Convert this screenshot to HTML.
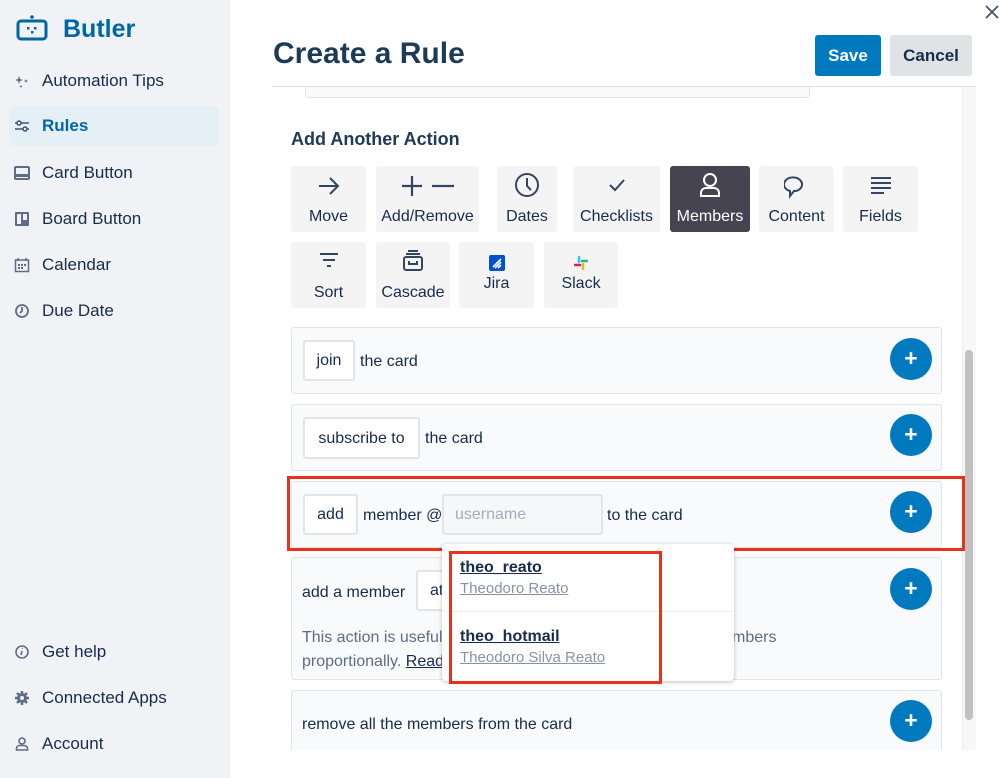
<!DOCTYPE html>
<html><head><meta charset="utf-8"><style>
*{box-sizing:border-box;margin:0;padding:0}
body{width:999px;height:778px;overflow:hidden;background:#fff;font-family:"Liberation Sans",sans-serif;color:#172b4d;position:relative}
.side{position:absolute;left:0;top:0;width:230px;height:778px;background:#f1f2f6}
.nav{position:absolute;left:14px;font-size:17px;color:#172b4d;display:flex;align-items:center}
.nav .ic{width:16px;height:16px;margin-right:12px;display:inline-block}
.sel{position:absolute;left:9px;top:106px;width:210px;height:40px;background:#e4f0f6;border-radius:6px}
.abs{position:absolute}
.btn{position:absolute;background:#f4f4f4;border-radius:3px;text-align:center;font-size:16px;color:#172b4d}
.btn svg{position:absolute;left:50%;transform:translateX(-50%)}
.btn .l{position:absolute;left:0;right:0;top:42px}
.card{position:absolute;left:291px;width:651px;background:#f9fafc;border:1px solid #e2e4e9;border-radius:3px;font-size:16px}
.plus{position:absolute;right:9px;width:42px;height:42px;border-radius:50%;background:#0079bf;color:#fff;text-align:center;line-height:41px;font-size:23px;font-weight:bold}
.box{position:absolute;background:#fff;border:2px solid #e2e4e9;border-radius:3px;text-align:center;font-size:16px}
</style></head><body>
<div class="side">
 <svg class="abs" style="left:16px;top:14px" width="32" height="28" viewBox="0 0 32 28"><circle cx="16" cy="3" r="1.8" fill="#0067a3"/><rect x="2" y="7" width="28" height="18" rx="3" fill="none" stroke="#0067a3" stroke-width="3"/><rect x="11" y="13" width="2.5" height="2.5" fill="#0067a3"/><rect x="18" y="13" width="2.5" height="2.5" fill="#0067a3"/><rect x="15" y="17" width="2.5" height="2.5" fill="#0067a3"/></svg>
 <div class="abs" style="left:63px;top:15px;font-size:25px;font-weight:bold;color:#0067a3">Butler</div>
 <div class="nav" style="top:71px"><svg class="ic" viewBox="0 0 16 16" fill="#5e6c84"><path d="M5 3l1 3 3 1-3 1-1 3-1-3-3-1 3-1z"/><path d="M12 6l.6 1.4L14 8l-1.4.6L12 10l-.6-1.4L10 8l1.4-.6z"/><path d="M7 12l.5 1 1 .5-1 .5-.5 1-.5-1-1-.5 1-.5z"/></svg>Automation Tips</div>
 <div class="sel"></div>
 <div class="nav" style="top:116px;color:#0067a3;font-weight:bold"><svg class="ic" viewBox="0 0 16 16" fill="none" stroke="#44546f" stroke-width="1.5"><path d="M1 5h14M1 11h14"/><circle cx="5" cy="5" r="2" fill="#f1f2f6"/><circle cx="11" cy="11" r="2" fill="#e4f0f6"/></svg>Rules</div>
 <div class="nav" style="top:163px"><svg class="ic" viewBox="0 0 16 16"><rect x="1" y="2" width="14" height="12" rx="1" fill="none" stroke="#5e6c84" stroke-width="2"/><rect x="2" y="9" width="12" height="3" fill="#5e6c84"/></svg>Card Button</div>
 <div class="nav" style="top:209px"><svg class="ic" viewBox="0 0 16 16"><rect x="1" y="1" width="14" height="14" rx="1" fill="#5e6c84"/><rect x="3" y="3" width="4" height="10" fill="#f1f2f6"/><rect x="9" y="3" width="4" height="6" fill="#f1f2f6"/></svg>Board Button</div>
 <div class="nav" style="top:255px"><svg class="ic" viewBox="0 0 16 16"><rect x="1.5" y="3" width="13" height="11.5" fill="none" stroke="#5e6c84" stroke-width="1.5"/><path d="M4 1v3M12 1v3" stroke="#5e6c84" stroke-width="1.5"/><path d="M4 7h2v2H4zM7 7h2v2H7zM10 7h2v2h-2zM4 10h2v2H4zM7 10h2v2H7z" fill="#5e6c84"/></svg>Calendar</div>
 <div class="nav" style="top:301px"><svg class="ic" viewBox="0 0 16 16" fill="none" stroke="#5e6c84" stroke-width="1.8"><circle cx="8" cy="8" r="6"/><path d="M8 4v4l-2 2"/></svg>Due Date</div>
 <div class="nav" style="top:642px"><svg class="ic" viewBox="0 0 16 16" fill="none" stroke="#5e6c84" stroke-width="1.6"><circle cx="8" cy="8" r="6"/><path d="M8 7l-1 4M8.3 4.5v.5"/></svg>Get help</div>
 <div class="nav" style="top:688px"><svg class="ic" viewBox="0 0 16 16"><circle cx="8" cy="8" r="5" fill="#5e6c84"/><path d="M8 1v14M1 8h14M3 3l10 10M13 3L3 13" stroke="#5e6c84" stroke-width="2.5"/><circle cx="8" cy="8" r="2" fill="#f1f2f6"/></svg>Connected Apps</div>
 <div class="nav" style="top:734px"><svg class="ic" viewBox="0 0 16 16" fill="none" stroke="#5e6c84" stroke-width="1.6"><circle cx="8" cy="5" r="3"/><path d="M2.5 14v-1.5a3 3 0 013-3h5a3 3 0 013 3V14z"/></svg>Account</div>
</div>

<svg class="abs" style="left:984px;top:4px" width="15" height="16" viewBox="0 0 15 16"><path d="M2 2l12 12M14 2L2 14" stroke="#44546f" stroke-width="1.8"/></svg>
<div class="abs" style="left:273px;top:37px;font-size:30px;font-weight:bold;color:#1d3a57">Create a Rule</div>
<div class="abs" style="left:815px;top:35px;width:66px;height:41px;background:#0079bf;border-radius:3px;color:#fff;font-weight:bold;font-size:17px;text-align:center;line-height:42px">Save</div>
<div class="abs" style="left:890px;top:35px;width:82px;height:41px;background:#e0e3e6;border-radius:3px;color:#172b4d;font-weight:bold;font-size:17px;text-align:center;line-height:42px">Cancel</div>
<div class="abs" style="left:273px;top:86px;width:703px;height:1px;background:#dcdfe4"></div>
<div class="abs" style="left:305px;top:87px;width:505px;height:11px;border:1px solid #e2e4e9;border-top:none;border-radius:0 0 4px 4px;background:#f9fafc"></div>
<div class="abs" style="left:962px;top:87px;width:14px;height:663px;background:#f7f7f7;border-left:1px solid #eee"></div>
<div class="abs" style="left:965px;top:350px;width:8px;height:370px;background:#c1c1c1;border-radius:4px"></div>
<div class="abs" style="left:291px;top:129px;font-size:18px;font-weight:bold;color:#1d3a57">Add Another Action</div>

<div class="btn" style="left:291px;top:166px;width:75px;height:66px"><svg style="top:9px" width="24" height="22" viewBox="0 0 24 22" fill="none" stroke="#344563" stroke-width="2"><path d="M2 11h19M13 3l8 8-8 8"/></svg><div class="l">Move</div></div>
<div class="btn" style="left:376px;top:166px;width:103px;height:66px"><svg style="top:9px" width="54" height="22" viewBox="0 0 54 22" fill="none" stroke="#344563" stroke-width="2.2"><path d="M1 11h20M11 1v20M31 11h22"/></svg><div class="l">Add/Remove</div></div>
<div class="btn" style="left:497px;top:166px;width:60px;height:66px"><svg style="top:6px" width="26" height="26" viewBox="0 0 26 26" fill="none" stroke="#344563" stroke-width="2"><circle cx="13" cy="13" r="11"/><path d="M13 6v8l4 4"/></svg><div class="l">Dates</div></div>
<div class="btn" style="left:573px;top:166px;width:87px;height:66px"><svg style="top:12px" width="18" height="14" viewBox="0 0 18 14" fill="none" stroke="#344563" stroke-width="2"><path d="M2 7l5 5L16 2"/></svg><div class="l">Checklists</div></div>
<div class="btn" style="left:670px;top:166px;width:80px;height:66px;background:#474452;color:#fff"><svg style="top:6px" width="22" height="26" viewBox="0 0 22 26" fill="none" stroke="#fff" stroke-width="2"><circle cx="11" cy="8" r="6"/><path d="M2 24v-3a5 5 0 015-5h8a5 5 0 015 5v3z"/></svg><div class="l">Members</div></div>
<div class="btn" style="left:759px;top:166px;width:75px;height:66px"><svg style="top:9px" width="26" height="24" viewBox="0 0 26 24" fill="none" stroke="#344563" stroke-width="2"><path d="M6 16a9 7 0 116 0H10l-4 5z"/></svg><div class="l">Content</div></div>
<div class="btn" style="left:843px;top:166px;width:75px;height:66px"><svg style="top:10px" width="22" height="18" viewBox="0 0 22 18" stroke="#344563" stroke-width="2"><path d="M1 2h20M1 7h20M1 12h20M1 17h13"/></svg><div class="l">Fields</div></div>

<div class="btn" style="left:291px;top:242px;width:75px;height:66px"><svg style="top:10px" width="20" height="18" viewBox="0 0 20 18" stroke="#344563" stroke-width="2"><path d="M1 2h18M4 8h12M8 14h4"/></svg><div class="l">Sort</div></div>
<div class="btn" style="left:376px;top:242px;width:74px;height:66px"><svg style="top:8px" width="22" height="22" viewBox="0 0 22 22" fill="none" stroke="#344563" stroke-width="2"><path d="M6 1h10M4 4h14"/><rect x="2" y="7" width="18" height="13" rx="2"/><path d="M7 11v3h8v-3"/></svg><div class="l">Cascade</div></div>
<div class="btn" style="left:459px;top:242px;width:75px;height:66px"><svg style="top:13px" width="16" height="16" viewBox="0 0 16 16"><rect width="16" height="16" rx="2" fill="#0052cc"/><path d="M4 12l8-8M6 13l6-6M9 13l3-3" stroke="#fff" stroke-width="1.6"/></svg><div class="l" style="top:33px">Jira</div></div>
<div class="btn" style="left:544px;top:242px;width:74px;height:66px"><svg style="top:14px" width="14" height="14" viewBox="0 0 14 14" stroke-width="2.5" stroke-linecap="round"><path d="M5 1v5" stroke="#36c5f0"/><path d="M8 5h5" stroke="#2eb67d"/><path d="M9 8v5" stroke="#ecb22e"/><path d="M1 9h5" stroke="#e01e5a"/></svg><div class="l" style="top:33px">Slack</div></div>

<div class="card" style="top:327px;height:67px"><div class="box" style="left:11px;top:12px;width:52px;height:41px;line-height:38px">join</div><span class="abs" style="left:68px;top:25px">the card</span><div class="plus" style="top:10px">+</div></div>
<div class="card" style="top:404px;height:67px"><div class="box" style="left:11px;top:12px;width:117px;height:42px;line-height:39px">subscribe to</div><span class="abs" style="left:133px;top:25px">the card</span><div class="plus" style="top:9px">+</div></div>
<div class="card" style="top:481px;height:67px"><div class="box" style="left:11px;top:12px;width:55px;height:41px;line-height:38px">add</div><span class="abs" style="left:71px;top:25px">member @</span><div class="box" style="left:150px;top:12px;width:161px;height:41px;line-height:38px;text-align:left;padding-left:11px;color:#a5adba;background:#f6f7f9">username</div><span class="abs" style="left:315px;top:25px">to the card</span><div class="plus" style="top:9px">+</div></div>
<div class="abs" style="left:287px;top:476px;width:678px;height:75px;border:3px solid #e8321c"></div>
<div class="card" style="top:557px;height:123px"><span class="abs" style="left:10px;top:26px">add a member</span><div class="box" style="left:124px;top:12px;width:60px;height:41px;line-height:38px;text-align:left;padding-left:12px">at</div><div class="abs" style="left:10px;top:68px;color:#5e6c84;line-height:24px">This action is useful ...<span style="position:absolute;left:430px;top:0;white-space:nowrap">mbers</span><br>proportionally. <u style="color:#172b4d">Read</u></div><div class="plus" style="top:10px">+</div></div>
<div class="card" style="top:690px;height:70px"><span class="abs" style="left:10px;top:25px">remove all the members from the card</span><div class="plus" style="top:9px">+</div></div>
<div class="abs" style="top:750px;width:768px;height:28px;background:#fff;left:231px"></div>

<div class="abs" style="left:442px;top:544px;width:292px;height:137px;background:#fff;border-radius:4px;box-shadow:0 1px 4px rgba(0,0,0,.25)">
 <div class="abs" style="left:0;top:67px;width:292px;height:1px;background:#eee"></div>
 <div class="abs" style="left:18px;top:15px;font-weight:bold;font-size:16px;text-decoration:underline;color:#172b4d">theo_reato</div>
 <div class="abs" style="left:18px;top:36px;font-size:15px;text-decoration:underline;color:#8993a4">Theodoro Reato</div>
 <div class="abs" style="left:18px;top:84px;font-weight:bold;font-size:16px;text-decoration:underline;color:#172b4d">theo_hotmail</div>
 <div class="abs" style="left:18px;top:105px;font-size:15px;text-decoration:underline;color:#8993a4">Theodoro Silva Reato</div>
</div>
<div class="abs" style="left:449px;top:551px;width:213px;height:133px;border:3px solid #e8321c"></div>
</body></html>
